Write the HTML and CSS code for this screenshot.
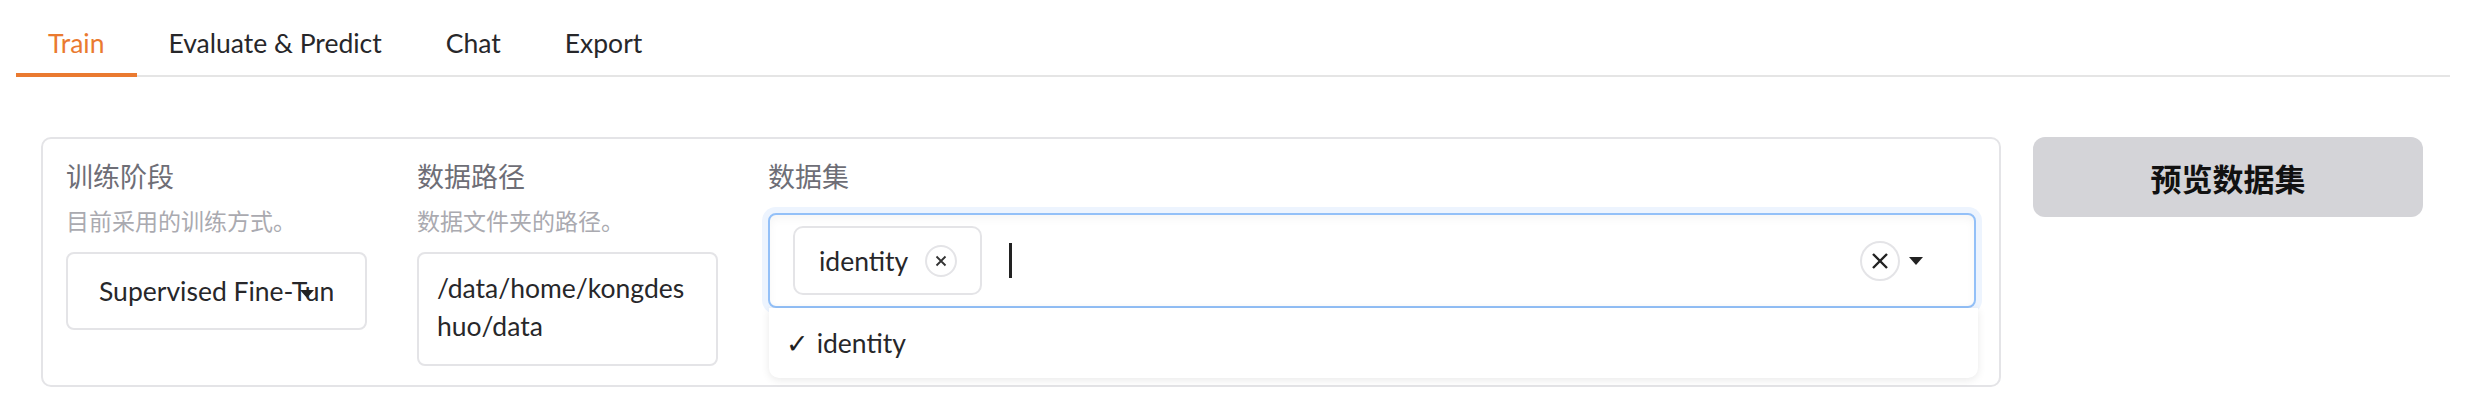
FILE: index.html
```html
<!DOCTYPE html>
<html lang="zh-CN">
<head>
<meta charset="utf-8">
<title>Train</title>
<link rel="stylesheet" href="styles.css">
</head>
<body>
<div class="app">
  <nav class="tabs">
    <button class="tab active">Train</button>
    <button class="tab">Evaluate &amp; Predict</button>
    <button class="tab">Chat</button>
    <button class="tab">Export</button>
  </nav>
  <main class="content">
    <section class="panel">
      <div class="field">
        <div class="label">训练阶段</div>
        <div class="info">目前采用的训练方式。</div>
        <div class="select">
          <span class="select-value">Supervised Fine-Tuning</span>
          <span class="arrow arrow-overlay"></span>
        </div>
      </div>
      <div class="field">
        <div class="label">数据路径</div>
        <div class="info">数据文件夹的路径。</div>
        <div class="textbox">/data/home/kongdeshuo/data</div>
      </div>
      <div class="field">
        <div class="label">数据集</div>
        <div class="multi-wrap">
          <div class="multi">
            <span class="chip">
              <span class="chip-text">identity</span>
              <span class="chip-x">
                <svg width="12" height="12" viewBox="0 0 12 12"><path d="M1.5 1.5L10.5 10.5M10.5 1.5L1.5 10.5" stroke="#333" stroke-width="1.8" fill="none"/></svg>
              </span>
            </span>
            <span class="text-caret"></span>
            <span class="spacer"></span>
            <span class="clear">
              <svg width="18" height="18" viewBox="0 0 18 18"><path d="M2 2L16 16M16 2L2 16" stroke="#222" stroke-width="2.4" fill="none"/></svg>
            </span>
            <span class="arrow"></span>
          </div>
          <ul class="menu">
            <li class="menu-item"><span class="check">✓</span>identity</li>
          </ul>
        </div>
      </div>
    </section>
    <button class="preview">预览数据集</button>
  </main>
</div>
</body>
</html>
```
FILE: styles.css
```css
* { box-sizing: border-box; }

body {
  margin: 0;
  background: #ffffff;
  font-family: Lato, "Noto Sans CJK SC", sans-serif;
  color: #27272a;
}

.app {
  padding: 0 24px 0 16px;
}

/* ---------- tabs ---------- */
.tabs {
  display: flex;
  padding-top: 15px;
  border-bottom: 2px solid #e5e5e5;
}

.tab {
  margin: 0 0 -2px 0;
  padding: 8px 32px 10px;
  border: none;
  border-bottom: 4px solid transparent;
  background: none;
  font-family: Lato, "Noto Sans CJK SC", sans-serif;
  font-size: 26.5px;
  line-height: 40px;
  color: #27272a;
  cursor: pointer;
}

.tab.active {
  color: #ea7a30;
  border-bottom-color: #ea7a30;
}

/* ---------- content ---------- */
.content {
  display: grid;
  grid-template-columns: 1fr 390px;
  column-gap: 32px;
  align-items: start;
  margin-top: 60px;
  padding: 0 27px 0 25px;
}

.panel {
  display: grid;
  grid-template-columns: 301px 301px 1fr;
  column-gap: 50px;
  align-items: start;
  padding: 20px 23px 19px;
  border: 2px solid #e4e4e7;
  border-radius: 10px;
  background: #ffffff;
}

.field {
  display: flex;
  flex-direction: column;
}

.label {
  font-size: 27px;
  line-height: 36px;
  color: #6e6e76;
  margin-bottom: 10px;
}

.info {
  font-size: 23px;
  line-height: 32px;
  color: #aaaab0;
  margin-bottom: 15px;
}

/* single dropdown */
.select {
  position: relative;
  display: flex;
  align-items: center;
  height: 78px;
  padding: 0 32px 0 31px;
  border: 2px solid #e4e4e7;
  border-radius: 8px;
  overflow: hidden;
  font-size: 26.5px;
  white-space: nowrap;
}

.select-value {
  overflow: hidden;
  flex: 1;
  min-width: 0;
}

.arrow {
  width: 0;
  height: 0;
  border-left: 7.5px solid transparent;
  border-right: 7.5px solid transparent;
  border-top: 8px solid #222222;
  flex: none;
}

.arrow-overlay {
  position: absolute;
  right: 51px;
  top: 36px;
}

/* textbox */
.textbox {
  min-height: 114px;
  padding: 15px 22px 19px 18px;
  border: 2px solid #e4e4e7;
  border-radius: 8px;
  font-size: 26.5px;
  line-height: 38px;
  word-break: break-all;
}

/* multiselect */
.multi-wrap {
  position: relative;
  margin-top: 8px;
}

.multi {
  display: flex;
  align-items: center;
  height: 95px;
  padding: 0 51px 0 23px;
  border: 2px solid #93c0f8;
  border-radius: 8px;
  box-shadow: 0 0 0 6px #edf4fe, inset 0 4px 8px rgba(0, 0, 0, 0.04);
  background: #ffffff;
}

.chip {
  display: flex;
  align-items: center;
  height: 69px;
  padding: 0 23px 0 24px;
  border: 2px solid #e4e4e7;
  border-radius: 10px;
  font-size: 26.5px;
}

.chip-x {
  display: flex;
  align-items: center;
  justify-content: center;
  width: 32px;
  height: 32px;
  margin-left: 17px;
  border: 2px solid #e4e4e7;
  border-radius: 50%;
}

.text-caret {
  width: 3px;
  height: 35px;
  margin-left: 27px;
  background: #222222;
}

.spacer {
  flex: 1;
}

.clear {
  display: flex;
  align-items: center;
  justify-content: center;
  width: 40px;
  height: 40px;
  margin-right: 9px;
  border: 2px solid #e4e4e7;
  border-radius: 50%;
}

.menu {
  position: absolute;
  top: 100%;
  left: 1px;
  right: -2px;
  margin: 0;
  padding: 0;
  list-style: none;
  height: 70px;
  background: #ffffff;
  border-radius: 0 0 10px 10px;
  box-shadow: 0 2px 8px rgba(0, 0, 0, 0.09);
}

.menu-item {
  display: flex;
  align-items: center;
  height: 70px;
  padding-left: 17px;
  font-size: 26.5px;
}

.check {
  font-family: "DejaVu Sans", sans-serif;
  font-size: 27px;
  line-height: 1;
  color: #1f1f22;
  margin-right: 8px;
}

/* button */
.preview {
  height: 80px;
  border: none;
  border-radius: 12px;
  background: #d4d4d8;
  font-family: Lato, "Noto Sans CJK SC", sans-serif;
  font-size: 31px;
  font-weight: 700;
  color: #111111;
  cursor: pointer;
}
```
